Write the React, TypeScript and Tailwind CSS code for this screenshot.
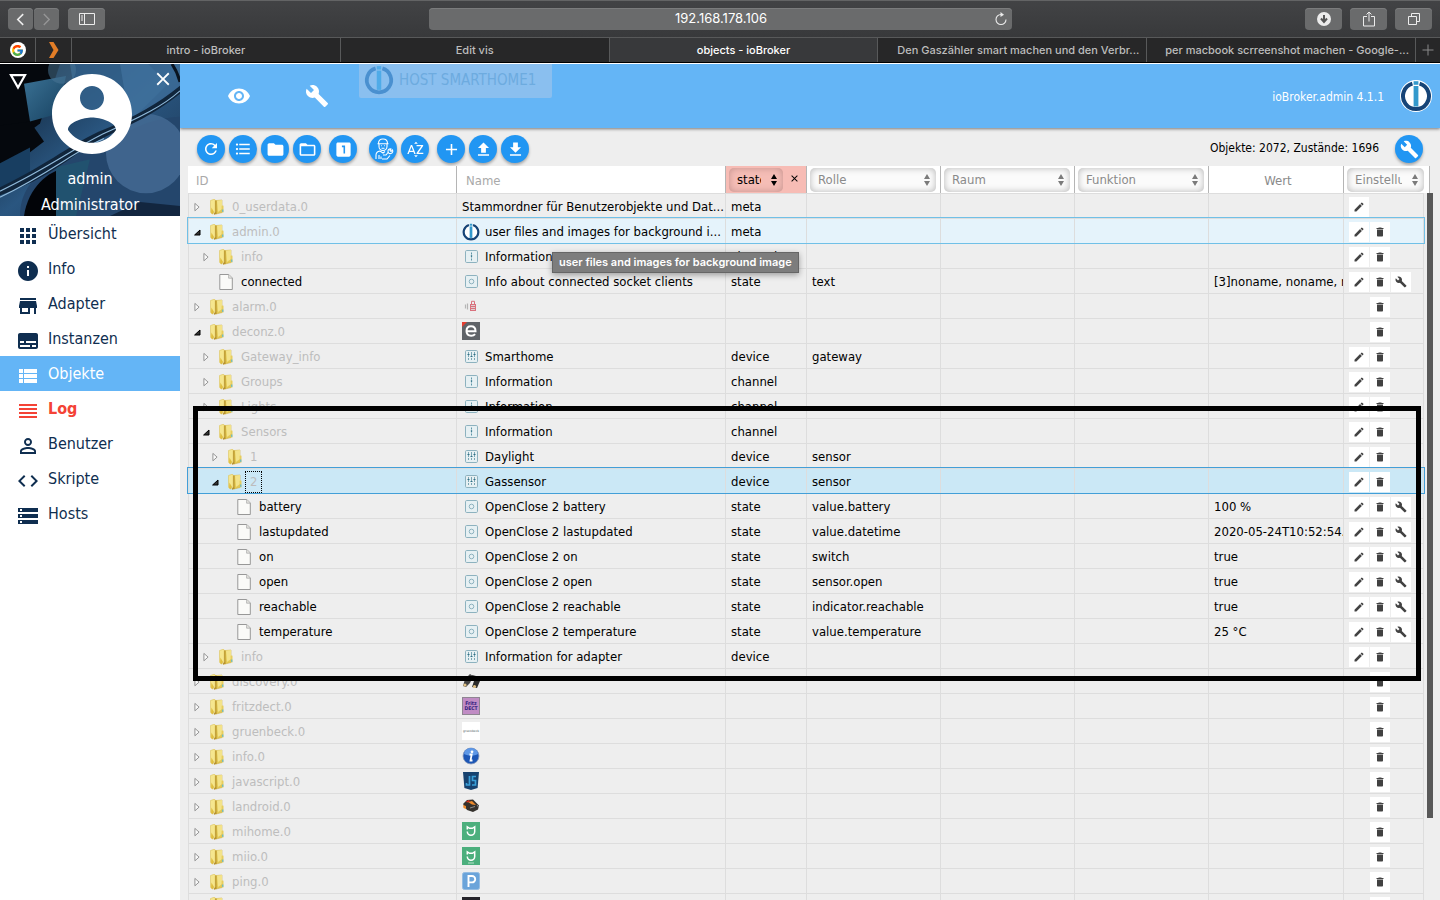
import { useState } from 'react';
import type { ReactNode } from 'react';
import clsx from 'clsx';
import { FcGoogle } from 'react-icons/fc';
import {
  MdAdd,
  MdApps,
  MdBuild,
  MdClose,
  MdCode,
  MdDelete,
  MdFileDownload,
  MdFileUpload,
  MdFolder,
  MdFolderOpen,
  MdFormatListBulleted,
  MdInfo,
  MdLooksOne,
  MdModeEdit,
  MdPersonOutline,
  MdRefresh,
  MdReorder,
  MdSortByAlpha,
  MdStorage,
  MdStore,
  MdSubtitles,
  MdViewList,
  MdVisibility,
} from 'react-icons/md';

interface TreeRow {
  id: string;
  level: number;
  kind: 'open' | 'closed' | 'leaf';
  icon?: string;
  name?: string;
  type?: string;
  role?: string;
  value?: string;
  actions: string;
}

// actions: e = edit, d = delete, w = settings
const rows: TreeRow[] = [
  { id: '0_userdata.0', level: 0, kind: 'closed', name: 'Stammordner für Benutzerobjekte und Dat...', type: 'meta', actions: 'e' },
  { id: 'admin.0', level: 0, kind: 'open', icon: 'iobroker', name: 'user files and images for background i...', type: 'meta', actions: 'ed' },
  { id: 'info', level: 1, kind: 'closed', icon: 'channel', name: 'Information', type: 'channel', actions: 'ed' },
  { id: 'connected', level: 1, kind: 'leaf', icon: 'state', name: 'Info about connected socket clients', type: 'state', role: 'text', value: '[3]noname, noname, noname', actions: 'edw' },
  { id: 'alarm.0', level: 0, kind: 'closed', icon: 'alarm', actions: 'd' },
  { id: 'deconz.0', level: 0, kind: 'open', icon: 'deconz', actions: 'd' },
  { id: 'Gateway_info', level: 1, kind: 'closed', icon: 'device', name: 'Smarthome', type: 'device', role: 'gateway', actions: 'ed' },
  { id: 'Groups', level: 1, kind: 'closed', icon: 'channel', name: 'Information', type: 'channel', actions: 'ed' },
  { id: 'Lights', level: 1, kind: 'closed', icon: 'channel', name: 'Information', type: 'channel', actions: 'ed' },
  { id: 'Sensors', level: 1, kind: 'open', icon: 'channel', name: 'Information', type: 'channel', actions: 'ed' },
  { id: '1', level: 2, kind: 'closed', icon: 'device', name: 'Daylight', type: 'device', role: 'sensor', actions: 'ed' },
  { id: '2', level: 2, kind: 'open', icon: 'device', name: 'Gassensor', type: 'device', role: 'sensor', actions: 'ed' },
  { id: 'battery', level: 3, kind: 'leaf', icon: 'state', name: 'OpenClose 2 battery', type: 'state', role: 'value.battery', value: '100 %', actions: 'edw' },
  { id: 'lastupdated', level: 3, kind: 'leaf', icon: 'state', name: 'OpenClose 2 lastupdated', type: 'state', role: 'value.datetime', value: '2020-05-24T10:52:54.', actions: 'edw' },
  { id: 'on', level: 3, kind: 'leaf', icon: 'state', name: 'OpenClose 2 on', type: 'state', role: 'switch', value: 'true', actions: 'edw' },
  { id: 'open', level: 3, kind: 'leaf', icon: 'state', name: 'OpenClose 2 open', type: 'state', role: 'sensor.open', value: 'true', actions: 'edw' },
  { id: 'reachable', level: 3, kind: 'leaf', icon: 'state', name: 'OpenClose 2 reachable', type: 'state', role: 'indicator.reachable', value: 'true', actions: 'edw' },
  { id: 'temperature', level: 3, kind: 'leaf', icon: 'state', name: 'OpenClose 2 temperature', type: 'state', role: 'value.temperature', value: '25 °C', actions: 'edw' },
  { id: 'info', level: 1, kind: 'closed', icon: 'device', name: 'Information for adapter', type: 'device', actions: 'ed' },
  { id: 'discovery.0', level: 0, kind: 'closed', icon: 'discovery', actions: 'd' },
  { id: 'fritzdect.0', level: 0, kind: 'closed', icon: 'fritz', actions: 'd' },
  { id: 'gruenbeck.0', level: 0, kind: 'closed', icon: 'gruenbeck', actions: 'd' },
  { id: 'info.0', level: 0, kind: 'closed', icon: 'info', actions: 'd' },
  { id: 'javascript.0', level: 0, kind: 'closed', icon: 'javascript', actions: 'd' },
  { id: 'landroid.0', level: 0, kind: 'closed', icon: 'landroid', actions: 'd' },
  { id: 'mihome.0', level: 0, kind: 'closed', icon: 'mihome', actions: 'd' },
  { id: 'miio.0', level: 0, kind: 'closed', icon: 'miio', actions: 'd' },
  { id: 'ping.0', level: 0, kind: 'closed', icon: 'ping', actions: 'd' },
  { id: '', level: 0, kind: 'closed', icon: 'dark', actions: 'd' },
];

const menu = [
  { label: 'Übersicht', icon: MdApps },
  { label: 'Info', icon: MdInfo },
  { label: 'Adapter', icon: MdStore },
  { label: 'Instanzen', icon: MdSubtitles },
  { label: 'Objekte', icon: MdViewList },
  { label: 'Log', icon: MdReorder },
  { label: 'Benutzer', icon: MdPersonOutline },
  { label: 'Skripte', icon: MdCode },
  { label: 'Hosts', icon: MdStorage },
];

const tabs = [
  { title: 'intro - ioBroker' },
  { title: 'Edit vis' },
  { title: 'objects - ioBroker', active: true },
  { title: 'Den Gaszähler smart machen und den Verbr...', long: true },
  { title: 'per macbook scrreenshot machen - Google-...', long: true },
];

const indent = ['pl-[2px]', 'pl-[11px]', 'pl-[20px]', 'pl-[29px]'];

function Logo({ className, faded }: { className: string; faded?: boolean }) {
  const ring = faded ? '#4a90d0' : '#164477';
  const bar = faded ? '#4fabe8' : '#3399cc';
  return (
    <svg viewBox="0 0 32 32" className={className}>
      {!faded && <circle cx="16" cy="16" r="16" fill="#fff" />}
      <path d="M12.4 3.6A13 13 0 1 0 19.6 3.6" fill="none" stroke={ring} strokeWidth="4" />
      <rect x="13.6" y="1.2" width="4.8" height="3.6" fill={bar} />
      <rect x="13.6" y="6" width="4.8" height="20.5" fill={bar} />
    </svg>
  );
}

function FolderIcon() {
  return (
    <svg viewBox="0 0 14 16" className="h-4 w-[14px] shrink-0">
      <path d="M5 1.6 12 1v12.6L6 15z" fill="#e3c854" stroke="#c9a93a" strokeWidth=".5" />
      <path d="M7 1.5 12 1v9l-4 3z" fill="#f3e38a" />
      <path d="M.5 1.5 4 .3c.8 0 1.2.4 1.2 1V13L2 14.8.5 13.4z" fill="#f5e68e" stroke="#d8bd4c" strokeWidth=".5" />
      <path d="M1.4 8.5 4 13 2.6 15.4 1 13.8z" fill="#e0bf42" />
      <path d="M5.3 1.4 6.5 2v13l-2.4.8-.4-1 1.6-1.7z" fill="#b8932b" />
      <rect x="11.6" y="6.5" width="1.9" height="7" rx=".5" fill="#e7cd5c" />
      <rect x="12.3" y="10.5" width="1" height="2.4" fill="#45b5e6" />
    </svg>
  );
}

function DocIcon() {
  return (
    <svg viewBox="0 0 14 16" className="h-4 w-[14px] shrink-0">
      <path d="M.8.5h9L13.3 4v11.5H.8z" fill="#fafaf8" stroke="#8d8d8d" strokeWidth=".9" />
      <path d="M9.6.6v3.6h3.6" fill="#e3e3df" stroke="#a5a5a5" strokeWidth=".7" />
    </svg>
  );
}

function Expander({ open }: { open: boolean }) {
  return (
    <svg viewBox="0 0 12 12" className="h-3 w-3 shrink-0">
      {open ? (
        <path d="M9 4v5H3.6z" fill="#333" stroke="#000" />
      ) : (
        <path d="M3.9 2.4v7.4l4.2-3.7z" fill="#fafafa" stroke="#8a8a8a" strokeWidth=".9" />
      )}
    </svg>
  );
}

function TypeFrame({ children }: { children: ReactNode }) {
  return (
    <g fill="none" stroke="#8db2bf" strokeWidth="1">
      <rect x="3.5" y="2.5" width="12" height="12" rx="1.2" fill="#e6f0f3" />
      {children}
    </g>
  );
}

function MiHead() {
  return (
    <g fill="none" stroke="#fff" strokeWidth="1.5">
      <path d="M5.3 7.6V4.8L7.6 6.3h2.8l2.300-1.500v4.700a3.700 3.700 0 0 1-7.400 0" />
    </g>
  );
}

const adapterIcons: Record<string, ReactNode> = {
  channel: (
    <TypeFrame>
      <path d="M9.5 4.5v8" strokeDasharray="2 1" stroke="#5f95a6" />
      <circle cx="9.5" cy="8" r=".8" fill="#2f6f84" stroke="none" />
    </TypeFrame>
  ),
  state: (
    <TypeFrame>
      <circle cx="9.5" cy="8.5" r="2.3" />
    </TypeFrame>
  ),
  device: (
    <TypeFrame>
      <path d="M6.5 4v9M9.5 4v9M12.5 4v9" strokeDasharray="5 1 2 1" stroke="#79a5b3" />
      <path d="M5.5 6.5h2M8.5 8.5h2M11.5 6.5h2" stroke="#2f6f84" />
    </TypeFrame>
  ),
  alarm: (
    <g>
      <path d="M3.5 7.5v4M5.5 6.5v6" stroke="#b5b5b5" strokeWidth="1.2" />
      <rect x="8.5" y="7.5" width="5" height="6" fill="#e0d0d2" stroke="#d9717d" />
      <path d="M9.5 7.5V4.3h3v3.2M9 9.5h4M9 11.5h4" fill="none" stroke="#d9717d" />
    </g>
  ),
  deconz: (
    <g>
      <rect width="18" height="18" fill="#5f6368" />
      <path d="M0 0h5L0 5z" fill="#e43d30" />
      <path d="M4.5 9.2h9c0-3.2-1.9-4.9-4.5-4.9S4.5 6.2 4.5 9.1s2 4.7 4.7 4.7c1.6 0 2.9-.5 3.9-1.6" fill="none" stroke="#fff" strokeWidth="2" />
    </g>
  ),
  discovery: (
    <g>
      <path d="m3 7 5-5 3 2-3 7-4 4-3-1z" fill="#444" />
      <path d="m10 3 4 1 4 5-3 7-5-1 2-6z" fill="#2b2b2b" />
      <circle cx="3" cy="13" r="1.6" fill="#e0c184" />
      <circle cx="12.5" cy="14.5" r="1.6" fill="#e0c184" />
    </g>
  ),
  fritz: (
    <g>
      <rect x=".5" y=".5" width="17" height="17" fill="#c08cc4" stroke="#8f8592" />
      <text x="9" y="7.5" textAnchor="middle" fontSize="5" fontWeight="700" fill="#33207e">Fritz</text>
      <text x="9" y="13" textAnchor="middle" fontSize="5" fontWeight="700" fill="#33207e">DECT</text>
    </g>
  ),
  gruenbeck: (
    <g>
      <rect width="18" height="18" fill="#fff" />
      <text x="9" y="10" textAnchor="middle" fontSize="3" fontWeight="700" fill="#8b9797">gruenbeck</text>
    </g>
  ),
  info: (
    <g>
      <circle cx="9" cy="9" r="8" fill="#1c56b5" stroke="#8b9cbb" strokeWidth=".8" />
      <path d="M2 7a7 6 0 0 1 14 0c-4 2-9 2-14 0z" fill="#5d97e6" />
      <circle cx="10" cy="4.8" r="1.4" fill="#fff" />
      <path d="M7.5 7.5h2.2L8.5 13.5h2" fill="none" stroke="#fff" strokeWidth="1.8" />
    </g>
  ),
  javascript: (
    <g>
      <path d="M1 0h16l-1.4 16L9 18l-6.6-2z" fill="#17426f" />
      <path d="M7.5 4v9h-3v-2M14 4.5h-3.5v4h3V13H10" fill="none" stroke="#3a9fd8" strokeWidth="1.7" />
    </g>
  ),
  landroid: (
    <g>
      <path d="m1 7 4-4 6-.5 6 6-1 4-5 2.500-6-2z" fill="#35312d" />
      <path d="m6 5 4-1 4 4-4-.5zM1 8l3 1v3l-2.500-1z" fill="#ee8a2b" />
      <path d="M4 4.5 7 3l1 1.500-3 1z" fill="#d8301f" />
      <path d="m8 11 5-1.500M15 8l1.500 2" stroke="#8d8d8d" />
    </g>
  ),
  mihome: (
    <g>
      <rect width="18" height="18" fill="#4caf7d" />
      <MiHead />
    </g>
  ),
  miio: (
    <g>
      <rect width="18" height="18" fill="#4caf7d" />
      <MiHead />
      <path d="M6 16h6" stroke="#b9e2cc" />
    </g>
  ),
  ping: (
    <g>
      <rect x=".5" y=".5" width="17" height="17" rx="2" fill="#6ba4da" stroke="#94bce2" />
      <path d="M6.5 15V4H10a3.200 3.200 0 0 1 0 6.400H6.500" fill="none" stroke="#fff" strokeWidth="1.9" />
    </g>
  ),
  dark: <rect width="18" height="18" fill="#25242b" />,
};

function NameIcon({ icon }: { icon: string }) {
  if (icon === 'iobroker') return <Logo className="size-[18px] shrink-0" />;
  return (
    <svg viewBox="0 0 18 18" className="size-[18px] shrink-0">
      {adapterIcons[icon]}
    </svg>
  );
}

function ExpertIcon() {
  return (
    <svg viewBox="0 0 24 24" className="size-6" fill="none" stroke="#fff" strokeWidth="1.1">
      <path d="M7.5 6.5C7.5 3.5 9 2 12 2s4.5 1.5 4.5 4.5M6.5 6.7h11M8 7v2.5a4 4 0 0 0 8 0V7M10.5 11.3h3M10 8.7h.8M13.2 8.7h.8" />
      <path d="M5 22v-4c0-2.5 1.5-3.5 4-4l3 2 2-1.5M8 22v-4M11 22h5l3-3.5M12 18h3l2-2.5M17 14c0 2 1 3 3 2.5s2-2.5 1.5-3.5L20 14.500l-1-1L20 12c-1.500-.5-3 .5-3 2zM10 19.500V22" />
    </svg>
  );
}

function RoundButton({ label, children }: { label: string; children: ReactNode }) {
  return (
    <button aria-label={label} className="flex size-7 shrink-0 items-center justify-center rounded-full bg-[#2196f3] text-white shadow-[0_2px_3px_rgba(0,0,0,0.3)]">
      {children}
    </button>
  );
}

function HeaderSelect({ label, tinted }: { label: string; tinted?: boolean }) {
  return (
    <div className="relative min-w-0 grow">
      <select
        aria-label={label}
        className={clsx(
          'block h-6 w-full appearance-none rounded-[5px] pr-[22px] pl-2 text-[13px]',
          tinted
            ? 'bg-[#f5bdb6] text-black shadow-[inset_0_0_7px_rgba(120,80,80,0.4)]'
            : 'bg-[#fbfbfb] text-[#8a8a8a] shadow-[inset_0_0_7px_rgba(0,0,0,0.28)]'
        )}
      >
        <option>{label}</option>
      </select>
      <svg viewBox="0 0 8 12" className={clsx('pointer-events-none absolute top-[6px] right-[5px] h-3 w-2', tinted ? 'fill-black' : 'fill-[#7b7b7b]')}>
        <path d="M4 0l3 5H1zM4 12l3-5H1z" />
      </svg>
    </div>
  );
}

function ChromeButton({ label, className, children }: { label: string; className: string; children: ReactNode }) {
  return (
    <button
      aria-label={label}
      className={clsx('flex h-[22px] items-center justify-center rounded-[4px] bg-[#6a6b6c] text-[#ececec] shadow-[inset_0_1px_0_#7b7c7d]', className)}
    >
      {children}
    </button>
  );
}

function BrowserBar() {
  return (
    <div className="shrink-0 border-b border-white bg-black pb-px font-[Inter,sans-serif]">
      <div className="grid h-[37px] grid-cols-[1fr_minmax(0,583px)_1fr] items-center border-t border-[#636465] bg-linear-to-b from-[#424345] to-[#38393b] px-2">
        <div className="flex gap-px">
          <ChromeButton label="Zurück" className="w-[25px]">
            <svg viewBox="0 0 10 14" className="h-[13px] w-[9px]" fill="none" stroke="currentColor" strokeWidth="1.8">
              <path d="M8 1 2 7l6 6" />
            </svg>
          </ChromeButton>
          <ChromeButton label="Vorwärts" className="w-[25px]">
            <svg viewBox="0 0 10 14" className="h-[13px] w-[9px] text-[#969697]" fill="none" stroke="currentColor" strokeWidth="1.5">
              <path d="m2 1 6 6-6 6" />
            </svg>
          </ChromeButton>
          <ChromeButton label="Seitenleiste" className="ml-2 w-[37px]">
            <svg viewBox="0 0 16 12" className="h-3 w-4" fill="none" stroke="currentColor">
              <path d="M.5.5h15v11H.5zM5.5.5v11M2 3h2M2 5h2M2 7h2" />
            </svg>
          </ChromeButton>
        </div>
        <div className="flex h-[22px] items-center rounded-[4px] bg-[#6a6b6c] px-1 text-[#ececec] shadow-[inset_0_1px_0_#7b7c7d]">
          <input aria-label="Adresse" defaultValue="192.168.178.106" className="min-w-0 grow pl-4 text-center text-[13px] text-white" />
          <button aria-label="Neu laden">
            <svg viewBox="0 0 14 14" className="size-[14px]" fill="none" stroke="currentColor" strokeWidth="1.1">
              <path d="M7 2.5a5 5 0 1 0 5 5" />
              <path d="M6.5 0 10 2.7 6.5 5z" fill="currentColor" stroke="none" />
            </svg>
          </button>
        </div>
        <div className="flex justify-end gap-2">
          <ChromeButton label="Downloads" className="w-[37px]">
            <svg viewBox="0 0 14 14" className="size-[14px]">
              <circle cx="7" cy="7" r="7" fill="#ececec" />
              <path d="M7 3v6M4 6.500l3 3.500 3-3.500" fill="none" stroke="#555" strokeWidth="2" />
            </svg>
          </ChromeButton>
          <ChromeButton label="Teilen" className="w-[37px]">
            <svg viewBox="0 0 12 16" className="h-4 w-3" fill="none" stroke="currentColor">
              <path d="M4 5.500H.5v9.500h11V5.500H8M6 10.500V1M3.500 3.500 6 1l2.500 2.500" />
            </svg>
          </ChromeButton>
          <ChromeButton label="Tabs" className="w-[37px]">
            <svg viewBox="0 0 12 12" className="size-3" fill="none" stroke="currentColor">
              <path d="M.5 3.500h8v8h-8zM3.500 3V.5h8v8H9" />
            </svg>
          </ChromeButton>
        </div>
      </div>
      <div className="flex h-[25px] border-t border-[#58595a] bg-[#272728] text-[11px] text-[#bdbdbd]">
        <button aria-label="Google" className="flex w-9 shrink-0 items-center justify-center border-r border-[#58595a]">
          <span className="flex size-4 items-center justify-center rounded-full bg-white">
            <FcGoogle className="size-[13px]" />
          </span>
        </button>
        <button aria-label="Lesezeichen" className="flex w-9 shrink-0 items-center justify-center border-r border-[#58595a]">
          <svg viewBox="0 0 10 16" className="h-4 w-[10px]">
            <path d="M0 0h4.500l5 8-5 8H0l4.500-8z" fill="#e27d27" />
          </svg>
        </button>
        {tabs.map((tab) => (
          <button
            key={tab.title}
            className={clsx(
              'min-w-0 flex-1 overflow-hidden border-r border-[#58595a] font-medium whitespace-nowrap',
              tab.active && 'bg-[#38393b] text-white'
            )}
          >
            <span className={clsx(tab.long && 'pl-3')}>{tab.title}</span>
          </button>
        ))}
        <button aria-label="Neuer Tab" className="flex w-6 shrink-0 items-center justify-center text-[#8a8a8a]">
          <svg viewBox="0 0 12 12" className="size-3" stroke="currentColor">
            <path d="M6 .5v11M.5 6h11" />
          </svg>
        </button>
      </div>
    </div>
  );
}

function ProfileBackdrop() {
  return (
    <svg viewBox="0 0 180 153" preserveAspectRatio="none" className="absolute inset-0 size-full">
      <defs>
        <linearGradient id="sky" x1="0" y1="0" x2="1" y2="1">
          <stop offset="0" stopColor="#0b1a2b" />
          <stop offset=".5" stopColor="#2a5680" />
          <stop offset="1" stopColor="#1b3552" />
        </linearGradient>
        <linearGradient id="glass" x1="0" y1="0" x2="1" y2="1">
          <stop offset="0" stopColor="#3b7295" />
          <stop offset="1" stopColor="#16405f" />
        </linearGradient>
      </defs>
      <rect width="180" height="153" fill="url(#sky)" />
      <path d="M0 0h60L40 60 0 90z" fill="#05080d" />
      <path d="M24 20 66 12l-8 38-28 8z" fill="url(#glass)" />
      <path d="M70 0h78l20 20-40 40-50-10z" fill="#35648f" opacity=".8" />
      <circle cx="62" cy="6" r="14" fill="#4b7898" opacity=".5" />
      <path d="M0 62 30 58l14 20L0 112z" fill="#05080d" />
      <path d="M0 100 30 84v26L0 130z" fill="#183e61" />
      <path d="M120 0h60v30l-50 30z" fill="#4577a3" opacity=".6" />
      <path d="M20 153c0-30 20-50 60-64s60-34 100-36v100z" fill="#24466c" />
      <path d="M24 153c4-28 24-46 42-48l-6 48z" fill="#020408" />
      <path d="M56 104l34-8-14 57H56z" fill="#21526f" />
      <circle cx="146" cy="90" r="40" fill="#486f98" opacity=".75" />
      <path d="M0 124C50 100 74 78 104 66s54-26 76-44v8c-30 24-56 34-80 46s-50 40-100 56z" fill="#10253b" />
      <path d="M0 128C50 104 78 82 106 69s54-24 74-42M0 134c50-24 74-46 104-59" fill="none" stroke="#8fb9da" strokeWidth="1.2" />
      <path d="M172 0c4 6 6 10 8 18" stroke="#0a1420" strokeWidth="3" fill="none" />
      <path d="M110 153l30-14 40 4v10z" fill="#12263f" />
    </svg>
  );
}

function Sidebar({ page, onNavigate }: { page: string; onNavigate: (page: string) => void }) {
  return (
    <aside className="flex w-[180px] shrink-0 flex-col bg-white">
      <div className="relative h-[152px] overflow-hidden text-base leading-[26px] text-white">
        <ProfileBackdrop />
        <div className="relative flex justify-between pt-1 pr-[6px] pl-2">
          <button aria-label="Design" className="mt-[6px] ml-px h-4 w-[18px]">
            <svg viewBox="0 0 18 16" fill="none" stroke="#fff" strokeWidth="2.2">
              <path d="M2 1.2h14L9 13.5z" />
            </svg>
          </button>
          <button aria-label="Menü schließen">
            <MdClose className="size-[22px]" />
          </button>
        </div>
        <div className="relative -mt-6 flex flex-col items-center">
          <svg viewBox="0 0 24 24" className="mb-1 size-24 translate-x-0.5 fill-white">
            <path d="M12 2C6.480 2 2 6.480 2 12s4.480 10 10 10 10-4.480 10-10S17.520 2 12 2zm0 3c1.660 0 3 1.340 3 3s-1.340 3-3 3-3-1.340-3-3 1.340-3 3-3zm0 14.200c-2.500 0-4.710-1.280-6-3.220.03-1.990 4-3.080 6-3.080 1.990 0 5.970 1.090 6 3.080-1.290 1.940-3.500 3.220-6 3.220z" />
          </svg>
          <p>admin</p>
          <p>Administrator</p>
        </div>
      </div>
      <nav>
        {menu.map(({ label, icon: Icon }) => (
          <a
            key={label}
            href="#"
            onClick={() => onNavigate(label)}
            className={clsx(
              'flex h-[35px] items-center gap-[10px] pl-[18px] text-base',
              page === label && 'bg-[#64b5f6] text-white',
              page !== label && label === 'Log' && 'font-bold text-[#f44336]',
              page !== label && label !== 'Log' && 'text-[#0f2e50]'
            )}
          >
            <Icon className="mt-1 size-5 shrink-0 scale-120" />
            <span className="pt-px">{label}</span>
          </a>
        ))}
      </nav>
    </aside>
  );
}

function RowActions({ actions }: { actions: string }) {
  const box = 'flex size-5 items-center justify-center bg-white text-[#424242]';
  return (
    <div className="flex gap-px pt-[3px] pl-[5px]">
      {actions.includes('e') ? (
        <button aria-label="Bearbeiten" className={box}>
          <MdModeEdit className="size-3" />
        </button>
      ) : (
        <span className="size-5" />
      )}
      {actions.includes('d') && (
        <button aria-label="Löschen" className={box}>
          <MdDelete className="size-3" />
        </button>
      )}
      {actions.includes('w') && (
        <button aria-label="Einstellungen" className={box}>
          <MdBuild className="size-3" />
        </button>
      )}
    </div>
  );
}

function ObjectTable() {
  const th = 'h-[27px] border-r border-[#b5b5b5] p-0 font-normal';
  const td = 'h-[25px] overflow-hidden border-t border-r border-[#dddddd] p-0 align-top whitespace-nowrap';
  const text = 'pt-[3px] pl-[5px]';
  return (
    <div className="relative mr-4 ml-2">
      <table className="w-full table-fixed border-separate border-spacing-0 text-left text-[13px] leading-5 text-black">
        <colgroup>
          <col />
          <col />
          <col className="w-[81px]" />
          <col className="w-[134px]" />
          <col className="w-[134px]" />
          <col className="w-[134px]" />
          <col className="w-[135px]" />
          <col className="w-[80px]" />
        </colgroup>
        <thead className="bg-white">
          <tr>
            <th className={th}>
              <input aria-label="ID" placeholder="ID" className="block w-full pt-0.5 pl-2 placeholder:text-[#a9a9a9]" />
            </th>
            <th className={th}>
              <input aria-label="Name" placeholder="Name" className="block w-full pt-0.5 pl-[9px] placeholder:text-[#a9a9a9]" />
            </th>
            <th className={clsx(th, 'bg-[#f7bcb5]')}>
              <div className="flex items-center pl-[3px]">
                <HeaderSelect label="state" tinted />
                <button aria-label="Filter löschen" className="flex w-[25px] items-center justify-center pb-0.5">
                  <MdClose className="size-[11px]" />
                </button>
              </div>
            </th>
            {['Rolle', 'Raum', 'Funktion'].map((label) => (
              <th key={label} className={th}>
                <div className="flex pr-1 pl-[3px]">
                  <HeaderSelect label={label} />
                </div>
              </th>
            ))}
            <th className={clsx(th, 'pt-0.5 pl-1 text-center text-[#8a8a8a]')}>Wert</th>
            <th className="relative p-0 font-normal after:absolute after:top-0 after:left-full after:h-full after:w-[6px] after:border-r after:border-[#b5b5b5] after:bg-white">
              <div className="relative z-10 flex pl-[3px]">
                <HeaderSelect label="Einstellungen" />
              </div>
            </th>
          </tr>
        </thead>
        <tbody>
          {rows.map((row, i) => (
            <tr
              key={i}
              className={clsx(
                row.id === 'admin.0' && 'bg-[#e5f3fb] outline outline-[#70c0e7]',
                row.id === '2' && 'bg-[#cbe8f6] outline outline-[#429fd8]'
              )}
            >
              <td className={clsx(td, 'border-l')}>
                <div className={clsx('flex items-center pt-[3px]', indent[row.level])}>
                  {row.kind === 'leaf' ? <span className="w-3" /> : <Expander open={row.kind === 'open'} />}
                  <span className="ml-[7px] flex items-center gap-2">
                    {row.kind === 'leaf' ? <DocIcon /> : <FolderIcon />}
                    <span
                      className={clsx(
                        row.kind !== 'leaf' && 'text-[#bdbdbd]',
                        row.id === '2' && '-mx-1 px-1 outline-1 outline-black outline-dotted'
                      )}
                    >
                      {row.id}
                    </span>
                  </span>
                </div>
              </td>
              <td className={td}>
                <div className={clsx('flex items-center gap-[5px]', text)}>
                  {row.icon && <NameIcon icon={row.icon} />}
                  <span>{row.name}</span>
                </div>
              </td>
              <td className={td}>
                <div className={text}>{row.type}</div>
              </td>
              <td className={td}>
                <div className={text}>{row.role}</div>
              </td>
              <td className={td} />
              <td className={td} />
              <td className={td}>
                <div className={text}>{row.value}</div>
              </td>
              <td className={td}>
                <RowActions actions={row.actions} />
              </td>
            </tr>
          ))}
        </tbody>
      </table>

      {/* scrollbar */}
      <div className="absolute top-[27px] -right-[9px] h-[625px] w-[6px] bg-[#585858]" />

      {/* highlighted sensor block */}
      <div className="pointer-events-none absolute top-60 right-[3px] left-[5px] h-[275px] border-[5px] border-black" />

      <div
        role="tooltip"
        className="absolute top-[86px] left-[364px] flex h-[21px] items-center border border-[#666] bg-[#7d7d7d] px-[6px] font-[Inter,sans-serif] text-[11px] font-semibold whitespace-nowrap text-white shadow-[0_2px_6px_rgba(0,0,0,0.35)]"
      >
        user files and images for background image
      </div>
    </div>
  );
}

export default function App() {
  const [page, setPage] = useState('Objekte');

  return (
    <div className="flex h-screen flex-col overflow-hidden bg-[#eeeeee] font-['DejaVu_Sans_Condensed','Noto_Sans',sans-serif]">
      <BrowserBar />
      <div className="flex min-h-0 grow">
        <Sidebar page={page} onNavigate={setPage} />
        <main className="min-w-0 grow overflow-hidden">
          <header className="flex h-16 items-center bg-[#64b5f6] text-xs text-white shadow-[0_1px_3px_rgba(0,0,0,0.5)]">
            <button aria-label="Sichtbarkeit" className="ml-[47px]">
              <MdVisibility className="size-6" />
            </button>
            <button aria-label="Einstellungen" className="ml-[54px]">
              <MdBuild className="size-6" />
            </button>
            <button className="ml-[30px] flex h-[34px] items-center gap-1 self-start rounded-b-[2px] bg-[#8abfef] pr-4 pl-1 text-[15px] text-[#6dabdf]">
              <Logo faded className="size-8 pb-0.5" />
              <span>HOST SMARTHOME1</span>
            </button>
            <span className="ml-auto pt-px">ioBroker.admin 4.1.1</span>
            <Logo className="mr-2 ml-4 size-8" />
          </header>
          <div className="flex h-[38px] items-center gap-2 pt-1 pr-[17px] pl-[17px]">
            <div className="flex gap-1">
              <RoundButton label="Aktualisieren"><MdRefresh className="size-[18px]" /></RoundButton>
              <RoundButton label="Liste"><MdFormatListBulleted className="size-[18px]" /></RoundButton>
              <RoundButton label="Alle zuklappen"><MdFolder className="size-[19px]" /></RoundButton>
              <RoundButton label="Alle aufklappen"><MdFolderOpen className="size-[19px]" /></RoundButton>
            </div>
            <RoundButton label="Eine Ebene"><MdLooksOne className="size-[19px]" /></RoundButton>
            <div className="ml-1 flex gap-1">
              <RoundButton label="Expertenmodus"><ExpertIcon /></RoundButton>
              <RoundButton label="Sortieren"><MdSortByAlpha className="size-[19px]" /></RoundButton>
            </div>
            <div className="flex gap-1">
              <RoundButton label="Hinzufügen"><MdAdd className="size-[19px]" /></RoundButton>
              <RoundButton label="Hochladen"><MdFileUpload className="size-[19px]" /></RoundButton>
              <RoundButton label="Herunterladen"><MdFileDownload className="size-[19px]" /></RoundButton>
            </div>
            <span className="ml-auto pr-2 pb-0.5 text-xs text-black">Objekte: 2072, Zustände: 1696</span>
            <RoundButton label="Ansicht anpassen"><MdBuild className="size-[19px]" /></RoundButton>
          </div>
          <ObjectTable />
        </main>
      </div>
    </div>
  );
}
